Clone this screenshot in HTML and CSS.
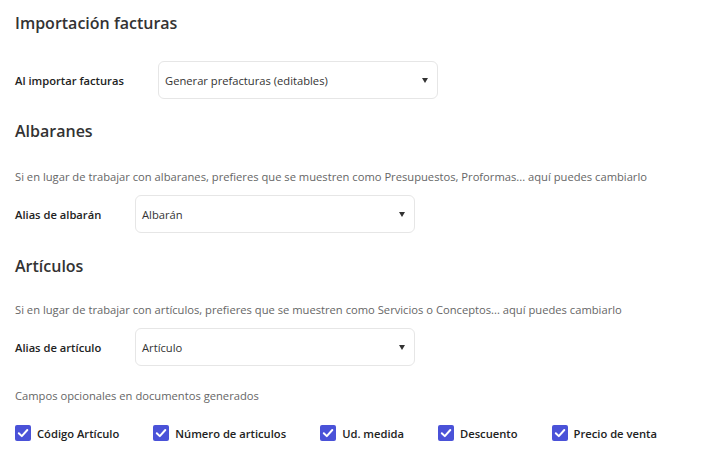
FILE: index.html
```html
<!DOCTYPE html>
<html lang="es">
<head>
<meta charset="utf-8">
<title>Configuración</title>
<link rel="stylesheet" href="styles.css">
</head>
<body>
<main class="page">
  <h2 class="title t1">Importación facturas</h2>
  <div class="row row-wide r1">
    <span class="label">Al importar facturas</span>
    <div class="select"><span>Generar prefacturas (editables)</span><i class="caret"></i></div>
  </div>

  <h2 class="title t2">Albaranes</h2>
  <p class="desc d1">Si en lugar de trabajar con albaranes, prefieres que se muestren como Presupuestos, Proformas... aquí puedes cambiarlo</p>
  <div class="row">
    <span class="label">Alias de albarán</span>
    <div class="select"><span>Albarán</span><i class="caret"></i></div>
  </div>

  <h2 class="title t3">Artículos</h2>
  <p class="desc d2">Si en lugar de trabajar con artículos, prefieres que se muestren como Servicios o Conceptos... aquí puedes cambiarlo</p>
  <div class="row">
    <span class="label">Alias de artículo</span>
    <div class="select"><span>Artículo</span><i class="caret"></i></div>
  </div>

  <p class="desc d3">Campos opcionales en documentos generados</p>
  <div class="checks">
    <label class="check"><span class="box"><svg viewBox="0 0 16 16"><path d="M3.8 8.2 L6.8 11.1 L12.3 5" /></svg></span>Código Artículo</label>
    <label class="check"><span class="box"><svg viewBox="0 0 16 16"><path d="M3.8 8.2 L6.8 11.1 L12.3 5" /></svg></span>Número de articulos</label>
    <label class="check"><span class="box"><svg viewBox="0 0 16 16"><path d="M3.8 8.2 L6.8 11.1 L12.3 5" /></svg></span>Ud. medida</label>
    <label class="check"><span class="box"><svg viewBox="0 0 16 16"><path d="M3.8 8.2 L6.8 11.1 L12.3 5" /></svg></span>Descuento</label>
    <label class="check"><span class="box"><svg viewBox="0 0 16 16"><path d="M3.8 8.2 L6.8 11.1 L12.3 5" /></svg></span>Precio de venta</label>
  </div>
</main>
</body>
</html>
```
FILE: styles.css
```css
html, body {
  margin: 0;
  padding: 0;
  background: #ffffff;
}
body {
  font-family: "Open Sans", "Noto Sans", sans-serif;
  color: #333;
}
.page {
  padding: 11px 15px 0 15px;
  display: flex;
  flex-direction: column;
  align-items: flex-start;
}
.title {
  margin: 0;
  font-size: 16px;
  line-height: 24px;
  font-weight: 600;
  color: #333;
}
.t2 { margin-top: 20px; }
.t3 { margin-top: 21px; }
.row {
  display: flex;
  align-items: center;
}
.r1 { margin-top: 26px; }
.label {
  width: 120px;
  font-size: 11.2px;
  font-weight: 600;
  color: #222;
}
.row-wide .label { width: 143px; }
.select {
  box-sizing: border-box;
  width: 280px;
  height: 38px;
  border: 1px solid #e6e6e6;
  border-radius: 6px;
  display: flex;
  align-items: center;
  justify-content: space-between;
  padding: 0 9px 0 6px;
  font-size: 11.2px;
  color: #333;
}
.caret {
  width: 0;
  height: 0;
  border-left: 3.5px solid transparent;
  border-right: 3.5px solid transparent;
  border-top: 5px solid #333;
}
.desc {
  margin: 0 0 10px 0;
  font-size: 11.2px;
  line-height: 16px;
  color: #666;
}
.d1 { margin-top: 26px; }
.d2 { margin-top: 24px; }
.d3 { margin-top: 22px; margin-bottom: 21px; }
.checks {
  display: flex;
  gap: 34px;
}
.check {
  display: flex;
  align-items: center;
  gap: 6px;
  font-size: 11.2px;
  font-weight: 600;
  color: #222;
}
.box {
  width: 16px;
  height: 16px;
  border-radius: 2px;
  background: #4a52d8;
  display: flex;
}
.box svg {
  width: 16px;
  height: 16px;
  fill: none;
  stroke: #fff;
  stroke-width: 2;
  stroke-linecap: round;
  stroke-linejoin: round;
}
```
